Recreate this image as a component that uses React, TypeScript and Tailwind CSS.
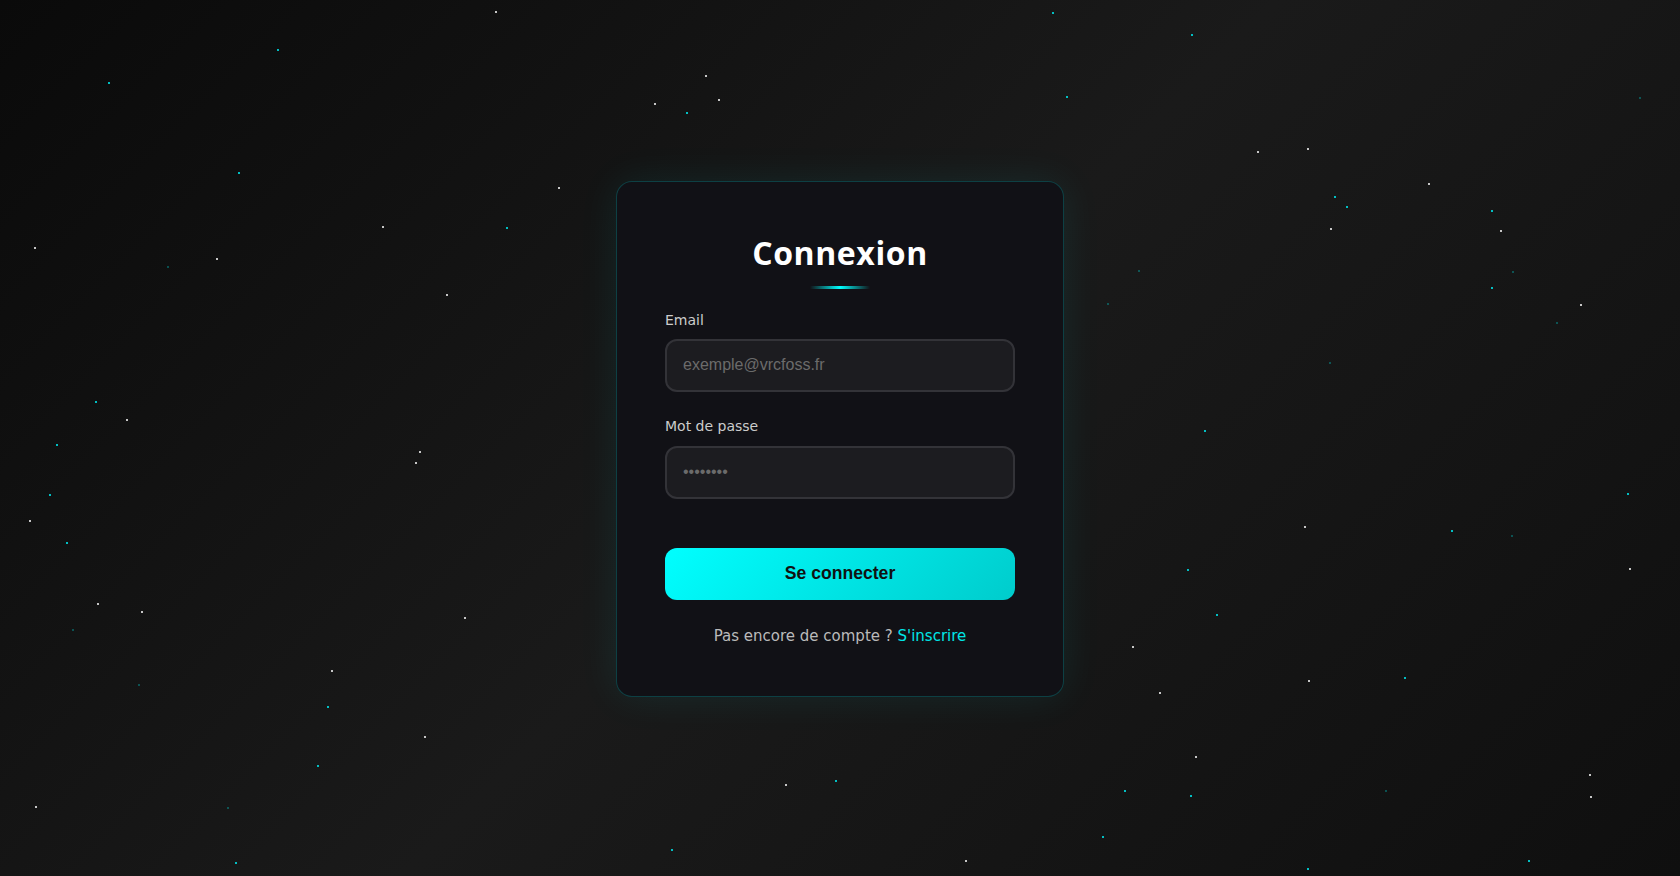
const STARS: [number, number, string][] = [
  [495, 11, "w"], [705, 75, "w"], [654, 103, "w"], [718, 99, "w"], [1307, 148, "w"],
  [1257, 151, "w"], [1428, 183, "w"], [1500, 230, "w"], [1330, 228, "w"], [1580, 304, "w"],
  [34, 247, "w"], [216, 258, "w"], [382, 226, "w"], [446, 294, "w"], [558, 187, "w"],
  [126, 419, "w"], [419, 451, "w"], [415, 462, "w"], [29, 520, "w"], [97, 603, "w"],
  [141, 611, "w"], [464, 617, "w"], [331, 670, "w"], [424, 736, "w"], [35, 806, "w"],
  [785, 784, "w"], [965, 860, "w"], [1304, 526, "w"], [1629, 568, "w"], [1132, 646, "w"],
  [1159, 692, "w"], [1308, 680, "w"], [1195, 756, "w"], [1589, 774, "w"], [1590, 796, "w"],
  [108, 82, "c"], [277, 49, "c"], [238, 172, "c"], [167, 266, "d"], [506, 227, "c"],
  [686, 112, "c"], [1052, 12, "c"], [1191, 34, "c"], [1066, 96, "c"], [1334, 196, "c"],
  [1346, 206, "c"], [1491, 210, "c"], [1491, 287, "c"], [1138, 270, "d"], [1107, 303, "d"],
  [1329, 362, "d"], [1556, 322, "d"], [1512, 271, "d"], [1639, 97, "d"], [95, 401, "c"],
  [56, 444, "c"], [49, 494, "c"], [66, 542, "c"], [72, 629, "d"], [138, 684, "d"],
  [327, 706, "c"], [317, 765, "c"], [227, 807, "d"], [235, 862, "c"], [671, 849, "c"],
  [835, 780, "c"], [1204, 430, "c"], [1216, 614, "c"], [1451, 530, "c"], [1511, 535, "d"],
  [1627, 493, "c"], [1404, 677, "c"], [1124, 790, "c"], [1190, 795, "c"], [1385, 790, "d"],
  [1102, 836, "c"], [1307, 868, "c"], [1528, 860, "c"], [1187, 569, "c"],
];

const starColor: Record<string, string> = {
  w: "rgba(230,230,230,0.85)",
  c: "rgba(0,220,225,0.85)",
  d: "rgba(0,200,200,0.35)",
};

export default function App() {
  return (
    <div className="relative flex h-[876px] w-full items-center justify-center overflow-hidden bg-[linear-gradient(135deg,#0a0a0a_0%,#1a1a1a_50%,#0f0f0f_100%)] font-['DejaVu_Sans',sans-serif]">
      <div className="pointer-events-none absolute inset-0">
        {STARS.map(([x, y, k], i) => (
          <span
            key={i}
            className="absolute h-[2px] w-[2px]"
            style={{ left: x, top: y, background: starColor[k] }}
          />
        ))}
      </div>

      <div className="relative mt-[1px] w-[448px] rounded-2xl border border-[rgba(0,255,255,0.2)] bg-[#111116] px-12 pt-12 pb-12 shadow-[0_0_40px_rgba(0,255,255,0.08)]">
        <h1 className="text-center font-['Open_Sans',sans-serif] text-[32px] leading-[46px] font-bold tracking-[0.6px] text-white">
          Connexion
        </h1>
        <div className="mx-auto mt-[10px] h-[3px] w-[60px] bg-[linear-gradient(90deg,transparent,#00ffff,transparent)]" />

        <form className="mt-[21px]" onSubmit={(e) => e.preventDefault()}>
          <label className="mb-[9px] block text-[14px] leading-5 text-[#cccccc]">Email</label>
          <input
            type="email"
            placeholder="exemple@vrcfoss.fr"
            className="block h-[53px] w-full rounded-xl border-2 border-[#333338] bg-[#1c1c20] px-4 font-['Liberation_Sans',sans-serif] text-[16px] text-white outline-none placeholder:text-[#6b6b6b]"
          />

          <label className="mt-6 mb-[10px] block text-[14px] leading-5 text-[#cccccc]">Mot de passe</label>
          <input
            type="password"
            placeholder="••••••••"
            className="block h-[53px] w-full rounded-xl border-2 border-[#333338] bg-[#1c1c20] px-4 font-['Liberation_Sans',sans-serif] text-[16px] text-white outline-none placeholder:text-[#6b6b6b]"
          />

          <button
            type="submit"
            className="mt-[49px] block h-[52px] w-full rounded-xl bg-[linear-gradient(135deg,#00ffff,#00cccc)] font-['Liberation_Sans',sans-serif] text-[17.6px] font-bold text-[#111111]"
          >
            Se connecter
          </button>
        </form>

        <p className="mt-6 text-center text-[15px] leading-6 text-[#bbbbbb]">
          Pas encore de compte ?{" "}
          <a href="#" className="text-[#00e6e6]">
            S'inscrire
          </a>
        </p>
      </div>
    </div>
  );
}
